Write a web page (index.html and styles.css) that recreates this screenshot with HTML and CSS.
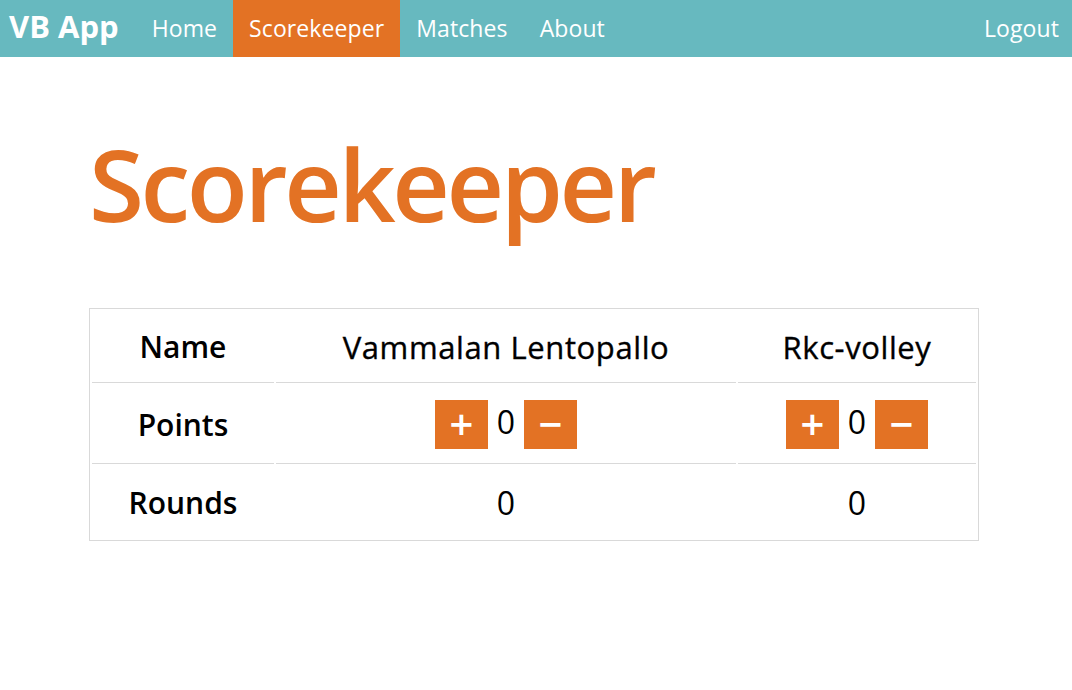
FILE: index.html
```html
<!DOCTYPE html>
<html>
<head>
<meta charset="utf-8">
<link rel="stylesheet" href="styles.css">
</head>
<body>
<nav class="navbar">
  <a class="brand" href="#">VB App</a>
  <ul class="nav">
    <li><a href="#">Home</a></li>
    <li class="active"><a href="#">Scorekeeper</a></li>
    <li><a href="#">Matches</a></li>
    <li><a href="#">About</a></li>
  </ul>
  <ul class="nav nav-right">
    <li><a href="#">Logout</a></li>
  </ul>
</nav>
<main class="container">
  <h1 class="title">Scorekeeper</h1>
  <table class="score">
    <tr class="head">
      <th class="label">Name</th>
      <td class="team">Vammalan Lentopallo</td>
      <td class="team">Rkc-volley</td>
    </tr>
    <tr class="points">
      <th class="label">Points</th>
      <td><span class="ctrl"><button class="btn">+</button><span class="val">0</span><button class="btn">−</button></span></td>
      <td><span class="ctrl"><button class="btn">+</button><span class="val">0</span><button class="btn">−</button></span></td>
    </tr>
    <tr class="rounds">
      <th class="label">Rounds</th>
      <td class="num">0</td>
      <td class="num">0</td>
    </tr>
  </table>
</main>
</body>
</html>
```
FILE: styles.css
```css
* { box-sizing: border-box; }
body {
  margin: 0;
  font-family: "Open Sans", "Noto Sans", sans-serif;
  color: #000;
  background: #fff;
}
.navbar {
  display: flex;
  align-items: stretch;
  height: 57px;
  background: #67b9bf;
}
.brand {
  color: #fff;
  text-decoration: none;
  font-weight: 700;
  font-size: 31px;
  letter-spacing: 0;
  padding: 0 17px 0 9px;
  display: flex;
  align-items: center;
  padding-bottom: 6px;
}
.nav {
  list-style: none;
  margin: 0;
  padding: 0;
  display: flex;
}
.nav li { display: flex; }
.nav a {
  color: #fff;
  text-decoration: none;
  font-size: 23px;
  letter-spacing: 0.1px;
  display: flex;
  align-items: center;
  padding: 0 16px 2px;
}
.nav .active { background: #e37224; }
.nav-right { margin-left: auto; }
.nav-right a { padding-right: 13px; }
.container {
  padding: 0 89px;
}
.title {
  margin: 0;
  padding-top: 76px;
  height: 251px;
  font-size: 100px;
  font-weight: 600;
  line-height: 1;
  color: #e37224;
  letter-spacing: -3.4px;
}
.score {
  width: 890px;
  border: 1px solid #d9d9d9;
  border-collapse: separate;
  border-spacing: 2px;
  font-size: 32px;
}
.score th, .score td {
  text-align: center;
  font-weight: 400;
  border-bottom: 1px solid #d9d9d9;
  padding: 0;
}
.score th { font-weight: 600; font-size: 30px; }
.score .team { font-weight: 500; font-size: 31px; letter-spacing: 0.6px; -webkit-text-stroke: 0.35px #000; }
.score tr:last-child th, .score tr:last-child td { border-bottom: none; }
.score .label { width: 182px; }
.score .head th, .score .head td { height: 72px; }
.score .head td:nth-child(2) { width: 460px; }
.points th, .points td { height: 79px; }
.rounds th, .rounds td { height: 72px; }
.ctrl {
  display: inline-flex;
  align-items: center;
  gap: 9px;
}
.btn {
  width: 53px;
  height: 49px;
  border: none;
  background: #e37224;
  color: #fff;
  font-family: "DejaVu Sans", sans-serif;
  font-weight: 700;
  font-size: 32px;
  padding: 0;
  line-height: 1;
}
.val {
  font-weight: 400;
  position: relative;
  top: -3px;
}
```
